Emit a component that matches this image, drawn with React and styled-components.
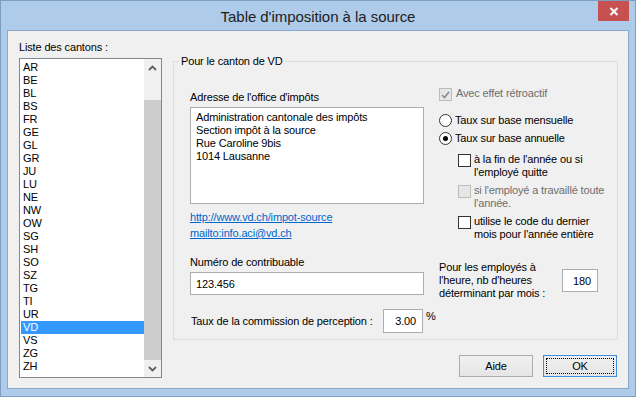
import React from 'react';
import styled, { createGlobalStyle } from 'styled-components';

const FONT = `"Liberation Sans", Arial, sans-serif`;

const COLORS = {
  frame: '#aecbe9',
  frameEdge: '#7f9dc2',
  clientEdge: '#8aa8cc',
  face: '#f0f0f0',
  disabled: '#6d6d6d',
  link: '#0066cc',
  fieldBorder: '#abadb3',
  listBorder: '#828790',
  groupBorder: '#dcdcdc',
  select: '#3399ff',
  close: '#c75050',
  thumb: '#cdcdcd',
};

const CANTONS = [
  'AR', 'BE', 'BL', 'BS', 'FR', 'GE', 'GL', 'GR', 'JU', 'LU', 'NE', 'NW',
  'OW', 'SG', 'SH', 'SO', 'SZ', 'TG', 'TI', 'UR', 'VD', 'VS', 'ZG', 'ZH',
];

const GlobalStyle = createGlobalStyle`
  html, body {
    margin: 0;
    padding: 0;
    background: ${COLORS.frame};
  }
  body {
    font-family: ${FONT};
    font-size: 11px;
    letter-spacing: -0.15px;
    color: #000;
  }
  * {
    box-sizing: border-box;
  }
`;

const Window = styled.div`
  position: relative;
  width: 636px;
  height: 397px;
  display: flex;
  flex-direction: column;
  background: ${COLORS.frame};
  border: 1px solid ${COLORS.frameEdge};
  padding: 0 6px 7px;
`;

const TitleBar = styled.div`
  height: 29px;
  flex: none;
  display: flex;
  align-items: center;
  justify-content: center;
  padding-top: 2px;
  font-size: 15px;
  letter-spacing: -0.05px;
  color: #1e1e1e;
`;

// window control lies over the title bar, like the real one
const CloseButton = styled.div`
  position: absolute;
  top: 0;
  right: 6px;
  width: 31px;
  height: 20px;
  background: ${COLORS.close};
  display: flex;
  align-items: center;
  justify-content: center;
`;

const Client = styled.div`
  flex: 1;
  border: 1px solid ${COLORS.clientEdge};
  background: ${COLORS.face};
  display: grid;
  grid-template-columns: 143px 445px;
  column-gap: 11px;
  padding: 10px 10px 0 11px;
`;

const Column = styled.div`
  display: flex;
  flex-direction: column;
  min-width: 0;
`;

const Label = styled.div`
  line-height: 13px;
  white-space: nowrap;
  margin-top: ${(p) => p.$mt || 0}px;
  padding-left: ${(p) => p.$indent || 0}px;
`;

const ListBox = styled.div`
  margin-top: 4px;
  height: 320px;
  border: 1px solid ${COLORS.listBorder};
  background: #fff;
  display: flex;
`;

const Items = styled.div`
  flex: 1;
  padding-top: 2px;
`;

const Item = styled.div`
  height: 13px;
  line-height: 13px;
  margin-left: 1px;
  padding-left: 2px;
  background: ${(p) => (p.$selected ? COLORS.select : 'transparent')};
  color: ${(p) => (p.$selected ? '#fff' : '#000')};
`;

const ScrollBar = styled.div`
  width: 17px;
  display: flex;
  flex-direction: column;
  background: ${COLORS.face};
`;

const ScrollArrow = styled.div`
  height: 17px;
  display: flex;
  align-items: center;
  justify-content: center;
`;

const ScrollTrack = styled.div`
  flex: 1;
  display: flex;
  flex-direction: column;
  justify-content: flex-end;
`;

const Thumb = styled.div`
  height: 260px;
  background: ${COLORS.thumb};
`;

const GroupBox = styled.fieldset`
  margin: 14px 0 0;
  padding: 0;
  min-width: 0;
  height: 285px;
  border: 1px solid ${COLORS.groupBorder};
`;

const Legend = styled.legend`
  margin-left: 5px;
  padding: 0 2px;
  line-height: 13px;
`;

const GroupContent = styled.div`
  display: grid;
  grid-template-columns: 234px 1fr;
  column-gap: 15px;
  padding: 19px 0 0 16px;
`;

const LeftPane = styled.div`
  padding-top: 4px;
  display: flex;
  flex-direction: column;
`;

const AddressBox = styled.div`
  margin-top: 3px;
  height: 97px;
  border: 1px solid ${COLORS.fieldBorder};
  background: #fff;
  padding: 3px 5px;
  line-height: 13px;
  white-space: pre-line;
`;

const Links = styled.div`
  margin-top: 5px;
  display: flex;
  flex-direction: column;
`;

const Link = styled.a`
  line-height: 16px;
  color: ${COLORS.link};
  text-decoration: underline;
  align-self: flex-start;
`;

const TextField = styled.div`
  height: ${(p) => p.$h || 23}px;
  width: ${(p) => (p.$w ? `${p.$w}px` : 'auto')};
  flex: none;
  margin-top: ${(p) => p.$mt || 0}px;
  border: 1px solid ${COLORS.fieldBorder};
  background: #fff;
  display: flex;
  align-items: center;
  justify-content: ${(p) => (p.$right ? 'flex-end' : 'flex-start')};
  padding: 0 6px 0 5px;
  white-space: nowrap;
`;

const CommissionRow = styled.div`
  margin-top: 14px;
  display: flex;
  align-items: center;
  white-space: nowrap;
`;

const CommissionLabel = styled.div`
  width: 193px;
  flex: none;
  padding-left: 1px;
`;

const Percent = styled.span`
  align-self: flex-start;
  margin: 1px 0 0 3px;
`;

const OptionsPane = styled.div`
  display: flex;
  flex-direction: column;
`;

const CheckRow = styled.div`
  display: flex;
  align-items: flex-start;
  gap: ${(p) => p.$gap || 4}px;
  margin-top: ${(p) => p.$mt || 0}px;
  line-height: 13px;
  white-space: nowrap;
  color: ${(p) => (p.$disabled ? COLORS.disabled : '#000')};
`;

const Box = styled.span`
  width: 13px;
  height: 13px;
  flex: none;
  margin-top: 1px;
  border: 1px solid ${(p) => (p.$disabled ? '#bcbcbc' : '#333')};
  background: ${(p) => (p.$disabled ? '#e6e6e6' : '#fff')};
  display: flex;
  align-items: center;
  justify-content: center;
`;

const RadioRow = styled.div`
  height: 18px;
  display: flex;
  align-items: center;
  gap: 3px;
  margin-top: ${(p) => p.$mt || 0}px;
  white-space: nowrap;
`;

const RadioCircle = styled.span`
  width: 13px;
  height: 13px;
  flex: none;
  border: 1px solid #333;
  border-radius: 50%;
  background: #fff;
  display: flex;
  align-items: center;
  justify-content: center;

  &::after {
    content: '';
    width: 5px;
    height: 5px;
    border-radius: 50%;
    background: ${(p) => (p.$checked ? '#000' : 'transparent')};
  }
`;

const SubOptions = styled.div`
  margin: 6px 0 0 19px;
  display: flex;
  flex-direction: column;
  gap: 5px;
`;

const HoursRow = styled.div`
  margin-top: 20px;
  display: flex;
  align-items: center;
`;

const HoursText = styled.div`
  width: 123px;
  flex: none;
  line-height: 13px;
  white-space: nowrap;
`;

const ButtonRow = styled.div`
  margin-top: 15px;
  padding-right: 1px;
  display: flex;
  justify-content: flex-end;
  gap: 10px;
`;

const Button = styled.button`
  width: 74px;
  height: 22px;
  padding: 0;
  font: inherit;
  letter-spacing: inherit;
  color: #000;
  border: 1px solid ${(p) => (p.$default ? '#3c8fe0' : '#acacac')};
  background: linear-gradient(#f0f0f0, #e5e5e5);
  outline: ${(p) => (p.$default ? '1px dotted #000' : 'none')};
  outline-offset: -4px;
`;

const Chevron = ({ up }) => (
  <svg width="9" height="6" viewBox="0 0 9 6">
    <path
      d={up ? 'M1 5 L4.5 1.5 L8 5' : 'M1 1 L4.5 4.5 L8 1'}
      fill="none"
      stroke="#606060"
      strokeWidth="1.8"
    />
  </svg>
);

const Tick = ({ color }) => (
  <svg width="9" height="8" viewBox="0 0 9 8">
    <path d="M1 4 L3.5 6.5 L8 1" fill="none" stroke={color} strokeWidth="1.6" />
  </svg>
);

const Checkbox = ({ checked, disabled, children, ...rest }) => (
  <CheckRow $disabled={disabled} {...rest}>
    <Box $disabled={disabled}>{checked && <Tick color={disabled ? '#8a8a8a' : '#000'} />}</Box>
    <span>{children}</span>
  </CheckRow>
);

const Radio = ({ checked, children, ...rest }) => (
  <RadioRow {...rest}>
    <RadioCircle $checked={checked} />
    <span>{children}</span>
  </RadioRow>
);

export default function App() {
  return (
    <>
      <GlobalStyle />
      <Window>
        <TitleBar>Table d'imposition à la source</TitleBar>
        <CloseButton>
          <svg width="10" height="9" viewBox="0 0 10 9">
            <path d="M1.5 1 L8.5 8 M8.5 1 L1.5 8" stroke="#fff" strokeWidth="2" />
          </svg>
        </CloseButton>
        <Client>
          <Column>
            <Label>Liste des cantons :</Label>
            <ListBox>
              <Items>
                {CANTONS.map((c) => (
                  <Item key={c} $selected={c === 'VD'}>{c}</Item>
                ))}
              </Items>
              <ScrollBar>
                <ScrollArrow><Chevron up /></ScrollArrow>
                <ScrollTrack><Thumb /></ScrollTrack>
                <ScrollArrow><Chevron /></ScrollArrow>
              </ScrollBar>
            </ListBox>
          </Column>

          <Column>
            <GroupBox>
              <Legend>Pour le canton de VD</Legend>
              <GroupContent>
                <LeftPane>
                  <Label>Adresse de l'office d'impôts</Label>
                  <AddressBox>
                    {'Administration cantonale des impôts\nSection impôt à la source\nRue Caroline 9bis\n1014 Lausanne'}
                  </AddressBox>
                  <Links>
                    <Link href="#">http://www.vd.ch/impot-source</Link>
                    <Link href="#">mailto:info.aci@vd.ch</Link>
                  </Links>
                  <Label $mt={15}>Numéro de contribuable</Label>
                  <TextField $mt={3}>123.456</TextField>
                  <CommissionRow>
                    <CommissionLabel>Taux de la commission de perception :</CommissionLabel>
                    <TextField $w={40} $h={24} $right>3.00</TextField>
                    <Percent>%</Percent>
                  </CommissionRow>
                </LeftPane>

                <OptionsPane>
                  <Checkbox checked disabled>Avec effet rétroactif</Checkbox>
                  <Radio $mt={10}>Taux sur base mensuelle</Radio>
                  <Radio checked>Taux sur base annuelle</Radio>
                  <SubOptions>
                    <Checkbox $gap={3}>à la fin de l'année ou si<br />l'employé quitte</Checkbox>
                    <Checkbox $gap={3} disabled>si l'employé a travaillé toute<br />l'année.</Checkbox>
                    <Checkbox $gap={3}>utilise le code du dernier<br />mois pour l'année entière</Checkbox>
                  </SubOptions>
                  <HoursRow>
                    <HoursText>
                      Pour les employés à<br />l'heure, nb d'heures<br />déterminant par mois :
                    </HoursText>
                    <TextField $w={36} $right>180</TextField>
                  </HoursRow>
                </OptionsPane>
              </GroupContent>
            </GroupBox>
            <ButtonRow>
              <Button>Aide</Button>
              <Button $default>OK</Button>
            </ButtonRow>
          </Column>
        </Client>
      </Window>
    </>
  );
}
